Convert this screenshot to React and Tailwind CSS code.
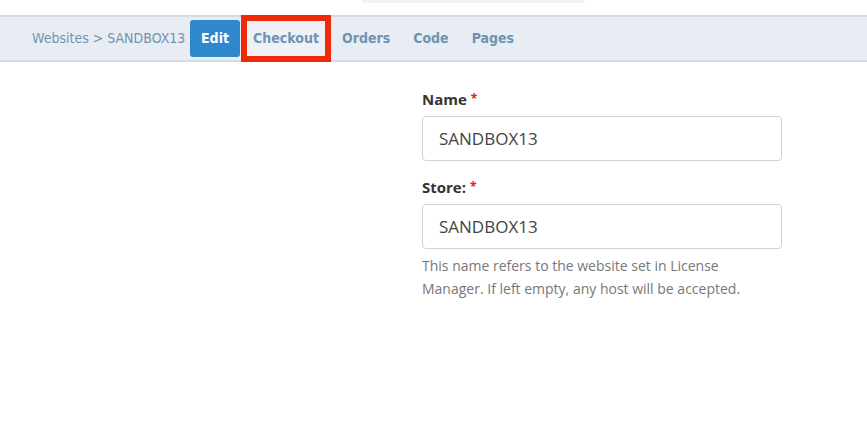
export default function App() {
  const font = { fontFamily: '"Open Sans", "Liberation Sans", sans-serif' };
  const tabs = ["Orders", "Code", "Pages"];
  return (
    <div className="w-[867px] h-[439px] bg-white overflow-hidden" style={font}>
      <div className="h-[15px] flex">
        <div className="ml-[362px] w-[223px] h-[3px] bg-[#f1f2f4] rounded-b" />
      </div>
      <div
        className="h-[47px] bg-[#e8edf3] border-t-2 border-b-2 border-[#d5dbe2] flex items-center pl-[32px] text-[15px] text-[#6e93b3]"
        style={{ fontFamily: '"DejaVu Sans Condensed", "Liberation Sans Narrow", sans-serif', fontSize: 14 }}
      >
        <span className="w-[158px]">Websites &gt; SANDBOX13</span>
        <span className="w-[50px] h-[37px] bg-[#2f87cc] text-white font-bold rounded-[3px] flex items-center justify-center">Edit</span>
        <span className="ml-px w-[90px] h-[47px] border-[6px] border-[#f02a07] bg-[#eef1f5] flex items-center justify-center font-bold">Checkout</span>
        <span className="ml-[11px] font-bold">Orders</span>
        <span className="ml-[23px] font-bold">Code</span>
        <span className="ml-[23px] font-bold">Pages</span>
      </div>
      <div className="ml-[422px] w-[360px] pt-[26px]">
        <label className="block text-[15px] font-bold text-[#333] leading-[22px]">
          Name <span className="text-[#e02020] text-[12px] align-top">*</span>
        </label>
        <div className="mt-[6px] h-[45px] border border-[#cfd3d7] rounded-[4px] flex items-center px-[16px] text-[17px] text-[#444]">
          SANDBOX13
        </div>
        <label className="block mt-[15px] text-[15px] font-bold text-[#333] leading-[22px]">
          Store: <span className="text-[#e02020] text-[12px] align-top">*</span>
        </label>
        <div className="mt-[6px] h-[45px] border border-[#cfd3d7] rounded-[4px] flex items-center px-[16px] text-[17px] text-[#444]">
          SANDBOX13
        </div>
        <p className="mt-[5px] text-[14px] leading-[23px] text-[#777]">
          This name refers to the website set in License Manager. If left empty, any host will be accepted.
        </p>
      </div>
    </div>
  );
}
